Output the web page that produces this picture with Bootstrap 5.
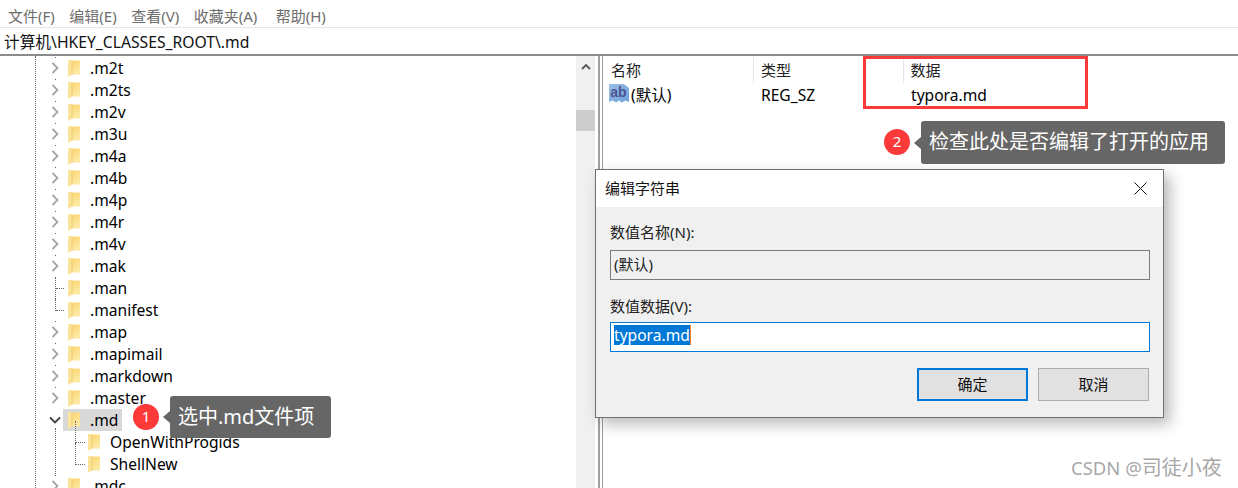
<!DOCTYPE html>
<html lang="zh">
<head>
<meta charset="utf-8">
<title>编辑字符串</title>
<link href="https://cdn.jsdelivr.net/npm/bootstrap@5.3.0/dist/css/bootstrap.min.css" rel="stylesheet">
<style>
html,body{height:488px;overflow:hidden;background:#fff}
body{font-family:"Noto Sans","Noto Sans CJK SC",sans-serif;font-size:15.6px;color:#000;position:relative;line-height:22px}
.menu-strip{height:27px;padding:5px 0 0 8px;gap:14.500px;color:#6d6d6d;font-size:15px;line-height:22px}
.addr-bar{height:29px;border-top:1px solid #e6e6e6;border-bottom:2px solid #8c8c8c;padding:3px 0 0 4px;font-size:15.700px;color:#111}
.reg-main{height:432px}
.tree-pane{width:576px;position:relative;overflow:hidden;padding-top:1px}
.tree-pane::before{content:"";position:absolute;left:35px;top:0;bottom:0;border-left:1px dotted #666}
.tree-pane::after{content:"";position:absolute;left:55px;top:372px;height:48px;border-left:1px dotted #666}
.tree-row{height:22px;position:relative}
.tree-row .arrow{position:absolute;left:49px;top:5px}
.tree-row .fold{position:absolute;left:68px;top:3px}
.tree-row .lbl{position:absolute;left:90px;top:0;white-space:nowrap}
.tree-row.gap-dot::before{content:"";position:absolute;left:55px;top:0;width:1px;height:1px;background:#666}
.tree-row.sel::before{content:"";position:absolute;left:63px;top:0;width:59px;height:22px;background:#d9d9d9}
.tree-row.stub::before{content:"";position:absolute;left:55px;top:0;height:22px;border-left:1px dotted #666}
.tree-row.stub.tail::before{height:12px}
.tree-row.stub::after{content:"";position:absolute;left:56px;top:11px;width:8px;border-top:1px dotted #666}
.tree-row.kid .fold{left:88px}
.tree-row.kid .lbl{left:110px}
.tree-row.kid::before{content:"";position:absolute;left:75px;top:-10px;height:22px;border-left:1px dotted #666}
.tree-row.kid::after{content:"";position:absolute;left:76px;top:11px;width:9px;border-top:1px dotted #666}
.scroll-track{width:19px;background:#f0f0f0;position:relative}
.scroll-thumb{position:absolute;left:0;top:54px;width:19px;height:21px;background:#cdcdcd}
.scroll-up{position:absolute;left:5px;top:7px}
.split-bar{background:#fff;border-left:2px solid #a0a0a0;margin-left:3px;border-right:1px solid #a0a0a0;width:5px}
.list-pane{flex:1;position:relative;padding-left:8px}
.list-head{height:26px;color:#222;font-size:15px;line-height:26px;padding-top:1px}
.list-head>div,.list-val>div{flex:none}
.hcol-a{width:143px;border-right:1px solid #e5e5e5;height:26px}
.hcol-b{width:150px;padding-left:7px;border-right:1px solid #e5e5e5;height:26px}
.hcol-c{padding-left:6.500px}
.list-val{height:25px;line-height:24px;padding-top:1px}
.vcol-a{width:143px;padding-left:20px;position:relative}
.vcol-b{width:151px;padding-left:7px}
.vcol-c{padding-left:6px}
.ab-ico{position:absolute;left:-2px;top:0}
.red-frame{position:absolute;left:863px;top:56px;width:225px;height:53px;border:3px solid #fc3a3a;pointer-events:none}
.num-dot{position:absolute;width:26px;height:26px;border-radius:50%;background:#fc3a3a;color:#fff;font-size:15px;line-height:25px;text-align:center}
.tip-box{position:absolute;background:#666;color:#fff;border-radius:3px;font-size:20px;line-height:42px;padding:0 8px;white-space:nowrap}
.tip-box::before{content:"";position:absolute;left:-7px;top:50%;margin-top:-6px;border-style:solid;border-width:6px 7px 6px 0;border-color:transparent #666 transparent transparent}
.str-dialog{position:absolute;left:595px;top:169px;width:569px;height:249px;background:#f0f0f0;border:1px solid #707070;box-shadow:6px 6px 14px rgba(0,0,0,.28)}
.str-title{height:37px;background:#fff;padding-left:9px;line-height:37px;font-size:15px;color:#111;position:relative}
.str-close{position:absolute;right:16px;top:12px}
.str-body{padding:14px 13px 0 14px;color:#222}
.str-label{height:22px;line-height:22px;font-size:15px}
.str-input{height:30px;border:1px solid #7a7a7a;padding:0 3px;line-height:26px;margin-top:7px;margin-bottom:15px;background:#f0f0f0;font-size:15px}
.str-input.on{background:#fff;border-color:#0078d7;margin-top:5px;margin-bottom:0;font-size:15.600px;padding-top:2px;line-height:20px}
.str-input mark{background:#0078d7;color:#fff;padding:0;border-right:1px solid #f08020;display:inline-block;line-height:20px;height:20px;vertical-align:top}
.str-actions{gap:10px;margin-top:16px;padding-right:1px}
.str-btn{width:111px;height:33px;background:#e1e1e1;border:1px solid #adadad;border-radius:0;font-size:15px;line-height:1;color:#111;padding:0}
.str-btn.dflt{border:2px solid #0078d7}
.csdn-mark{position:absolute;left:1071px;top:456px;color:#a8a8a8;font-size:18.500px;line-height:24px;white-space:nowrap}
.csdn-mark span{font-size:20px}
</style>
</head>
<body>
<svg width="0" height="0" class="position-absolute">
<defs>
<linearGradient id="fg" x1="0" y1="0" x2="0.400" y2="1"><stop offset="0" stop-color="#fbd66e"/><stop offset="1" stop-color="#fde9a6"/></linearGradient>
<linearGradient id="abg" x1="0" y1="0" x2="1" y2="1"><stop offset="0" stop-color="#9cc0e8"/><stop offset="1" stop-color="#6d9fd8"/></linearGradient>
<symbol id="fold" viewBox="0 0 12 17"><path d="M3 0.500h9v14H3z" fill="url(#fg)"/><path d="M0 0h4v14.500L0 17z" fill="#fbe49a"/><path d="M4 1v13.500" stroke="#eccb73" stroke-width="1"/></symbol>
<symbol id="chev" viewBox="0 0 12 12"><path d="M3.500 1l5 5-5 5" fill="none" stroke="#a6a6a6" stroke-width="1.800"/></symbol>
<symbol id="chevd" viewBox="0 0 12 12"><path d="M1 3.500l5 5 5-5" fill="none" stroke="#404040" stroke-width="1.800"/></symbol>
</defs>
</svg>

<div class="menu-strip d-flex">
<span>文件(F)</span><span>编辑(E)</span><span>查看(V)</span><span>收藏夹(A)</span><span class="ms-1">帮助(H)</span>
</div>
<div class="addr-bar">计算机\HKEY_CLASSES_ROOT\.md</div>

<div class="reg-main d-flex">
<div class="tree-pane">
<div class="tree-row gap-dot"><svg class="arrow" width="12" height="12"><use href="#chev"/></svg><svg class="fold" width="12" height="17"><use href="#fold"/></svg><span class="lbl">.m2t</span></div>
<div class="tree-row gap-dot"><svg class="arrow" width="12" height="12"><use href="#chev"/></svg><svg class="fold" width="12" height="17"><use href="#fold"/></svg><span class="lbl">.m2ts</span></div>
<div class="tree-row gap-dot"><svg class="arrow" width="12" height="12"><use href="#chev"/></svg><svg class="fold" width="12" height="17"><use href="#fold"/></svg><span class="lbl">.m2v</span></div>
<div class="tree-row gap-dot"><svg class="arrow" width="12" height="12"><use href="#chev"/></svg><svg class="fold" width="12" height="17"><use href="#fold"/></svg><span class="lbl">.m3u</span></div>
<div class="tree-row gap-dot"><svg class="arrow" width="12" height="12"><use href="#chev"/></svg><svg class="fold" width="12" height="17"><use href="#fold"/></svg><span class="lbl">.m4a</span></div>
<div class="tree-row gap-dot"><svg class="arrow" width="12" height="12"><use href="#chev"/></svg><svg class="fold" width="12" height="17"><use href="#fold"/></svg><span class="lbl">.m4b</span></div>
<div class="tree-row gap-dot"><svg class="arrow" width="12" height="12"><use href="#chev"/></svg><svg class="fold" width="12" height="17"><use href="#fold"/></svg><span class="lbl">.m4p</span></div>
<div class="tree-row gap-dot"><svg class="arrow" width="12" height="12"><use href="#chev"/></svg><svg class="fold" width="12" height="17"><use href="#fold"/></svg><span class="lbl">.m4r</span></div>
<div class="tree-row gap-dot"><svg class="arrow" width="12" height="12"><use href="#chev"/></svg><svg class="fold" width="12" height="17"><use href="#fold"/></svg><span class="lbl">.m4v</span></div>
<div class="tree-row gap-dot"><svg class="arrow" width="12" height="12"><use href="#chev"/></svg><svg class="fold" width="12" height="17"><use href="#fold"/></svg><span class="lbl">.mak</span></div>
<div class="tree-row stub"><svg class="fold" width="12" height="17"><use href="#fold"/></svg><span class="lbl">.man</span></div>
<div class="tree-row stub tail"><svg class="fold" width="12" height="17"><use href="#fold"/></svg><span class="lbl">.manifest</span></div>
<div class="tree-row gap-dot"><svg class="arrow" width="12" height="12"><use href="#chev"/></svg><svg class="fold" width="12" height="17"><use href="#fold"/></svg><span class="lbl">.map</span></div>
<div class="tree-row gap-dot"><svg class="arrow" width="12" height="12"><use href="#chev"/></svg><svg class="fold" width="12" height="17"><use href="#fold"/></svg><span class="lbl">.mapimail</span></div>
<div class="tree-row gap-dot"><svg class="arrow" width="12" height="12"><use href="#chev"/></svg><svg class="fold" width="12" height="17"><use href="#fold"/></svg><span class="lbl">.markdown</span></div>
<div class="tree-row gap-dot"><svg class="arrow" width="12" height="12"><use href="#chev"/></svg><svg class="fold" width="12" height="17"><use href="#fold"/></svg><span class="lbl">.master</span></div>
<div class="tree-row sel"><svg class="arrow" width="12" height="12"><use href="#chevd"/></svg><svg class="fold" width="12" height="17"><use href="#fold"/></svg><span class="lbl">.md</span></div>
<div class="tree-row kid"><svg class="fold" width="12" height="17"><use href="#fold"/></svg><span class="lbl">OpenWithProgids</span></div>
<div class="tree-row kid"><svg class="fold" width="12" height="17"><use href="#fold"/></svg><span class="lbl">ShellNew</span></div>
<div class="tree-row"><svg class="arrow" width="12" height="12"><use href="#chev"/></svg><svg class="fold" width="12" height="17"><use href="#fold"/></svg><span class="lbl">.mdc</span></div>
</div>
<div class="scroll-track">
<svg class="scroll-up" width="10" height="8" viewBox="0 0 10 8"><path d="M1 6l4-4 4 4" fill="none" stroke="#555" stroke-width="1.800"/></svg>
<div class="scroll-thumb"></div>
</div>
<div class="split-bar"></div>
<div class="list-pane">
<div class="list-head d-flex"><div class="hcol-a">名称</div><div class="hcol-b">类型</div><div class="hcol-c">数据</div></div>
<div class="list-val d-flex"><div class="vcol-a"><svg class="ab-ico" width="20" height="21" viewBox="0 0 20 21"><path d="M0 1h15l5 4v14l-3.500-1.500-3.500 2-3-2-3 2-3-2-4 1.500z" fill="url(#abg)"/><text x="9.500" y="14" text-anchor="middle" font-size="14" font-weight="700" fill="#4d5590" font-family="Liberation Sans">ab</text></svg>(默认)</div><div class="vcol-b">REG_SZ</div><div class="vcol-c">typora.md</div></div>
</div>
</div>

<div class="red-frame"></div>
<div class="num-dot" style="left:884px;top:129px">2</div>
<div class="tip-box" style="left:921px;top:121px;width:304px;height:43px">检查此处是否编辑了打开的应用</div>
<div class="num-dot" style="left:133px;top:404px">1</div>
<div class="tip-box" style="left:170px;top:396px;width:161px;height:42px">选中.md文件项</div>

<div class="str-dialog">
<div class="str-title">编辑字符串
<svg class="str-close" width="13" height="13" viewBox="0 0 13 13"><path d="M.5.500l12 12M12.500.500l-12 12" stroke="#111" stroke-width="1"/></svg>
</div>
<div class="str-body">
<div class="str-label">数值名称(N):</div>
<div class="str-input">(默认)</div>
<div class="str-label">数值数据(V):</div>
<div class="str-input on"><mark>typora.md</mark></div>
<div class="str-actions d-flex justify-content-end">
<button type="button" class="btn str-btn dflt">确定</button>
<button type="button" class="btn str-btn">取消</button>
</div>
</div>
</div>

<div class="csdn-mark">CSDN @<span>司徒小夜</span></div>
</body>
</html>
